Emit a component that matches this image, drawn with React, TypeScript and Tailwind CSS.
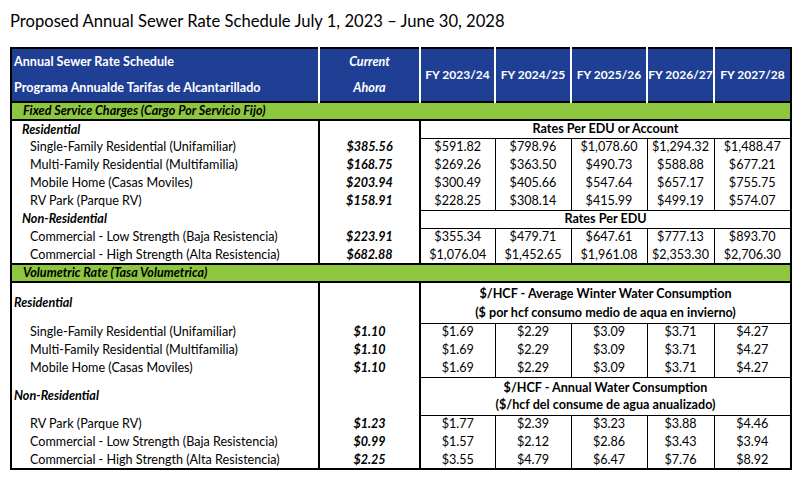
import React from "react";

type Row = { label: string; current: string; values: string[] };

const fixedResidential: Row[] = [
  { label: "Single-Family Residential (Unifamiliar)", current: "$385.56", values: ["$591.82", "$798.96", "$1,078.60", "$1,294.32", "$1,488.47"] },
  { label: "Multi-Family Residential (Multifamilia)", current: "$168.75", values: ["$269.26", "$363.50", "$490.73", "$588.88", "$677.21"] },
  { label: "Mobile Home (Casas Moviles)", current: "$203.94", values: ["$300.49", "$405.66", "$547.64", "$657.17", "$755.75"] },
  { label: "RV Park (Parque RV)", current: "$158.91", values: ["$228.25", "$308.14", "$415.99", "$499.19", "$574.07"] },
];

const fixedNonResidential: Row[] = [
  { label: "Commercial - Low Strength (Baja Resistencia)", current: "$223.91", values: ["$355.34", "$479.71", "$647.61", "$777.13", "$893.70"] },
  { label: "Commercial - High Strength (Alta Resistencia)", current: "$682.88", values: ["$1,076.04", "$1,452.65", "$1,961.08", "$2,353.30", "$2,706.30"] },
];

const volResidential: Row[] = [
  { label: "Single-Family Residential (Unifamiliar)", current: "$1.10", values: ["$1.69", "$2.29", "$3.09", "$3.71", "$4.27"] },
  { label: "Multi-Family Residential (Multifamilia)", current: "$1.10", values: ["$1.69", "$2.29", "$3.09", "$3.71", "$4.27"] },
  { label: "Mobile Home (Casas Moviles)", current: "$1.10", values: ["$1.69", "$2.29", "$3.09", "$3.71", "$4.27"] },
];

const volNonResidential: Row[] = [
  { label: "RV Park (Parque RV)", current: "$1.23", values: ["$1.77", "$2.39", "$3.23", "$3.88", "$4.46"] },
  { label: "Commercial - Low Strength (Baja Resistencia)", current: "$0.99", values: ["$1.57", "$2.12", "$2.86", "$3.43", "$3.94"] },
  { label: "Commercial - High Strength (Alta Resistencia)", current: "$2.25", values: ["$3.55", "$4.79", "$6.47", "$7.76", "$8.92"] },
];

const years = ["FY 2023/24", "FY 2024/25", "FY 2025/26", "FY 2026/27", "FY 2027/28"];

function DataRow({ row }: { row: Row }) {
  return (
    <tr className="h-[18px]">
      <td className="pl-[18px] whitespace-nowrap">{row.label}</td>
      <td className="border-x-2 border-black text-center font-bold italic">{row.current}</td>
      {row.values.map((v, i) => (
        <td key={i} className={i < 4 ? "border-r border-black text-center whitespace-nowrap" : "text-center whitespace-nowrap"}>
          {v}
        </td>
      ))}
    </tr>
  );
}

function GreenBar({ text }: { text: string }) {
  return (
    <tr className="h-[18px] bg-[#8dc63f]">
      <td colSpan={7} className="border-y-2 border-black pl-[11px] font-bold italic">
        {text}
      </td>
    </tr>
  );
}

export default function App() {
  return (
    <div className="min-h-screen bg-white font-['Lato',sans-serif] text-black">
      <div className="h-[47px] pl-[10px] pt-[8px] text-[16.6px] leading-[26px]">
        Proposed Annual Sewer Rate Schedule July 1, 2023 – June 30, 2028
      </div>
      <table className="ml-[10px] w-[780px] table-fixed border-collapse border-2 border-black text-[12.6px] leading-[16px]">
        <colgroup>
          <col className="w-[308px]" />
          <col className="w-[101px]" />
          <col className="w-[75px]" />
          <col className="w-[76px]" />
          <col className="w-[76px]" />
          <col className="w-[67px]" />
          <col className="w-[77px]" />
        </colgroup>
        <thead className="bg-[#1f3f95] text-white">
          <tr className="h-[27px]">
            <th className="border-r-2 border-white pl-[2px] text-left font-bold">Annual Sewer Rate Schedule</th>
            <th className="border-r-2 border-white text-center font-bold italic">Current</th>
            {years.map((y, i) => (
              <th
                key={y}
                rowSpan={2}
                className={
                  i < 4
                    ? "border-r-2 border-white text-center text-[12px] font-bold whitespace-nowrap"
                    : "text-center text-[12px] font-bold whitespace-nowrap"
                }
              >
                {y}
              </th>
            ))}
          </tr>
          <tr className="h-[27px]">
            <th className="border-r-2 border-white pl-[2px] text-left font-bold">Programa Annualde Tarifas de Alcantarillado</th>
            <th className="border-r-2 border-white text-center font-bold italic">Ahora</th>
          </tr>
        </thead>
        <tbody>
          <GreenBar text="Fixed Service Charges (Cargo Por Servicio Fijo)" />
          <tr className="h-[18px]">
            <td className="pl-[10px] font-bold italic">Residential</td>
            <td className="border-x-2 border-black"></td>
            <td colSpan={5} className="border-b border-black text-center font-bold">Rates Per EDU or Account</td>
          </tr>
          {fixedResidential.map((r) => (
            <DataRow key={r.label} row={r} />
          ))}
          <tr className="h-[18px]">
            <td className="pl-[10px] font-bold italic">Non-Residential</td>
            <td className="border-x-2 border-black"></td>
            <td colSpan={5} className="border-y border-black text-center font-bold">Rates Per EDU</td>
          </tr>
          {fixedNonResidential.map((r) => (
            <DataRow key={r.label} row={r} />
          ))}
          <GreenBar text="Volumetric Rate (Tasa Volumetrica)" />
          <tr className="h-[41px]">
            <td className="pl-[2px] font-bold italic">Residential</td>
            <td className="border-x-2 border-black"></td>
            <td colSpan={5} className="border-b border-black text-center font-bold leading-[19px]">
              $/HCF - Average Winter Water Consumption
              <br />
              ($ por hcf consumo medio de aqua en invierno)
            </td>
          </tr>
          {volResidential.map((r) => (
            <DataRow key={r.label} row={r} />
          ))}
          <tr className="h-[38px]">
            <td className="pl-[2px] font-bold italic">Non-Residential</td>
            <td className="border-x-2 border-black"></td>
            <td colSpan={5} className="border-y border-black text-center font-bold leading-[17px]">
              $/HCF - Annual Water Consumption
              <br />
              ($/hcf del consume de agua anualizado)
            </td>
          </tr>
          {volNonResidential.map((r) => (
            <DataRow key={r.label} row={r} />
          ))}
        </tbody>
      </table>
    </div>
  );
}
